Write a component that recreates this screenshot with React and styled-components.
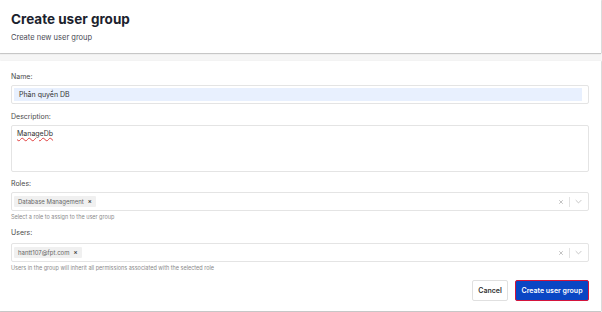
import React from 'react';
import styled, { createGlobalStyle } from 'styled-components';

const GlobalStyle = createGlobalStyle`
    html, body {
        margin: 0;
        padding: 0;
        background: #f6f6f6;
        font-family: Inter, "Noto Sans", sans-serif;
    }
`;

const Page = styled.div`
    width: 602px;
    height: 312px;
    display: flex;
    flex-direction: column;
    gap: 8px;
    overflow: hidden;
`;

const Card = styled.div`
    background: #fff;
    margin-right: 1px;
    box-shadow: 0 1px 1px rgba(0,0,0,0.18), 1px 0 1px rgba(0,0,0,0.08);
`;

const Header = styled(Card)`
    height: 53px;
    padding: 11px 11px 0;
    box-sizing: border-box;
`;

const Title = styled.h1`
    margin: 0;
    font-size: 13.5px;
    line-height: 17px;
    font-weight: 700;
    color: #1c1f2e;
`;

const Subtitle = styled.div`
    margin-top: 5px;
    font-size: 7.5px;
    line-height: 10px;
    color: #4a4a55;
`;

const Body = styled(Card)`
    height: 250px;
    box-sizing: border-box;
    padding: 11px 12px 0 11px;
    display: flex;
    flex-direction: column;
`;

const Field = styled.div`
    display: flex;
    flex-direction: column;
    margin-bottom: ${props => props.gap || 7}px;
`;

const Label = styled.div`
    font-size: 7px;
    line-height: 10px;
    color: #4a4a4a;
    margin-bottom: ${props => props.gap || 3}px;
`;

const Box = styled.div`
    border: 1px solid #e4e4e4;
    border-radius: 2px;
    box-sizing: border-box;
    height: ${props => props.h}px;
    padding: 2px;
    display: flex;
`;

const Autofill = styled.div`
    flex: 1;
    margin-right: 4px;
    background: #e8f0fe;
    font-size: 7px;
    color: #333;
    display: flex;
    align-items: center;
    padding-left: 5px;
`;

const AreaText = styled.div`
    padding: 1px 3px;
    font-size: 7px;
    color: #333;
    text-decoration: underline wavy #e04040;
    text-decoration-thickness: 0.5px;
    text-underline-offset: 1px;
`;

const Select = styled(Box)`
    align-items: center;
    padding: 0 2px;
`;

const Tags = styled.div`
    flex: 1;
    display: flex;
`;

const Tag = styled.span`
    display: inline-flex;
    align-items: center;
    gap: 4px;
    height: 11px;
    padding: 0 4px;
    background: #f0f0f0;
    border-radius: 1px;
    font-size: 6px;
    color: #666;
`;

const TagX = styled.span`
    font-size: 6px;
    color: #444;
    font-weight: 700;
`;

const Indicators = styled.div`
    display: flex;
    align-items: center;
    gap: 5px;
    padding-right: 4px;
`;

const Sep = styled.span`
    width: 1px;
    height: 10px;
    background: #e2e2e2;
`;

const Help = styled.div`
    font-size: 5.5px;
    line-height: 10px;
    color: #8a8a8a;
    margin-top: 1px;
`;

const Actions = styled.div`
    display: flex;
    justify-content: flex-end;
    gap: 7px;
`;

const Button = styled.button`
    height: 21px;
    box-sizing: border-box;
    border-radius: 2px;
    font-family: inherit;
    font-size: 7px;
    font-weight: 600;
    white-space: nowrap;
    padding: 0;
    cursor: pointer;
    background: ${props => props.primary ? '#0a46c4' : '#fff'};
    color: ${props => props.primary ? '#fff' : '#333'};
    border: ${props => props.primary ? '1.5px solid #d4143c' : '1px solid #e0e0e0'};
    width: ${props => props.primary ? 74 : 36}px;
`;

const ClearIcon = () => (
    <svg width="6" height="6" viewBox="0 0 10 10">
        <path d="M2 2 L8 8 M8 2 L2 8" stroke="#c0c0c0" strokeWidth="1.6" />
    </svg>
);

const Chevron = () => (
    <svg width="7" height="5" viewBox="0 0 10 6">
        <path d="M1 1 L5 5 L9 1" stroke="#c0c0c0" strokeWidth="1.3" fill="none" />
    </svg>
);

const MultiSelect = ({ value }) => (
    <Select h={19}>
        <Tags>
            <Tag>{value}<TagX>×</TagX></Tag>
        </Tags>
        <Indicators>
            <ClearIcon />
            <Sep />
            <Chevron />
        </Indicators>
    </Select>
);

export default function App() {
    return (
        <Page>
            <GlobalStyle />
            <Header>
                <Title>Create user group</Title>
                <Subtitle>Create new user group</Subtitle>
            </Header>
            <Body>
                <Field gap={8}>
                    <Label>Name:</Label>
                    <Box h={19}>
                        <Autofill>Phân quyền DB</Autofill>
                    </Box>
                </Field>
                <Field gap={7}>
                    <Label>Description:</Label>
                    <Box h={47}>
                        <AreaText>ManageDb</AreaText>
                    </Box>
                </Field>
                <Field gap={6}>
                    <Label>Roles:</Label>
                    <MultiSelect value="Database Management" />
                    <Help>Select a role to assign to the user group</Help>
                </Field>
                <Field gap={7}>
                    <Label gap={5}>Users:</Label>
                    <MultiSelect value="hantt107@fpt.com" />
                    <Help>Users in the group will inherit all permissions associated with the selected role</Help>
                </Field>
                <Actions>
                    <Button>Cancel</Button>
                    <Button primary>Create user group</Button>
                </Actions>
            </Body>
        </Page>
    );
}
